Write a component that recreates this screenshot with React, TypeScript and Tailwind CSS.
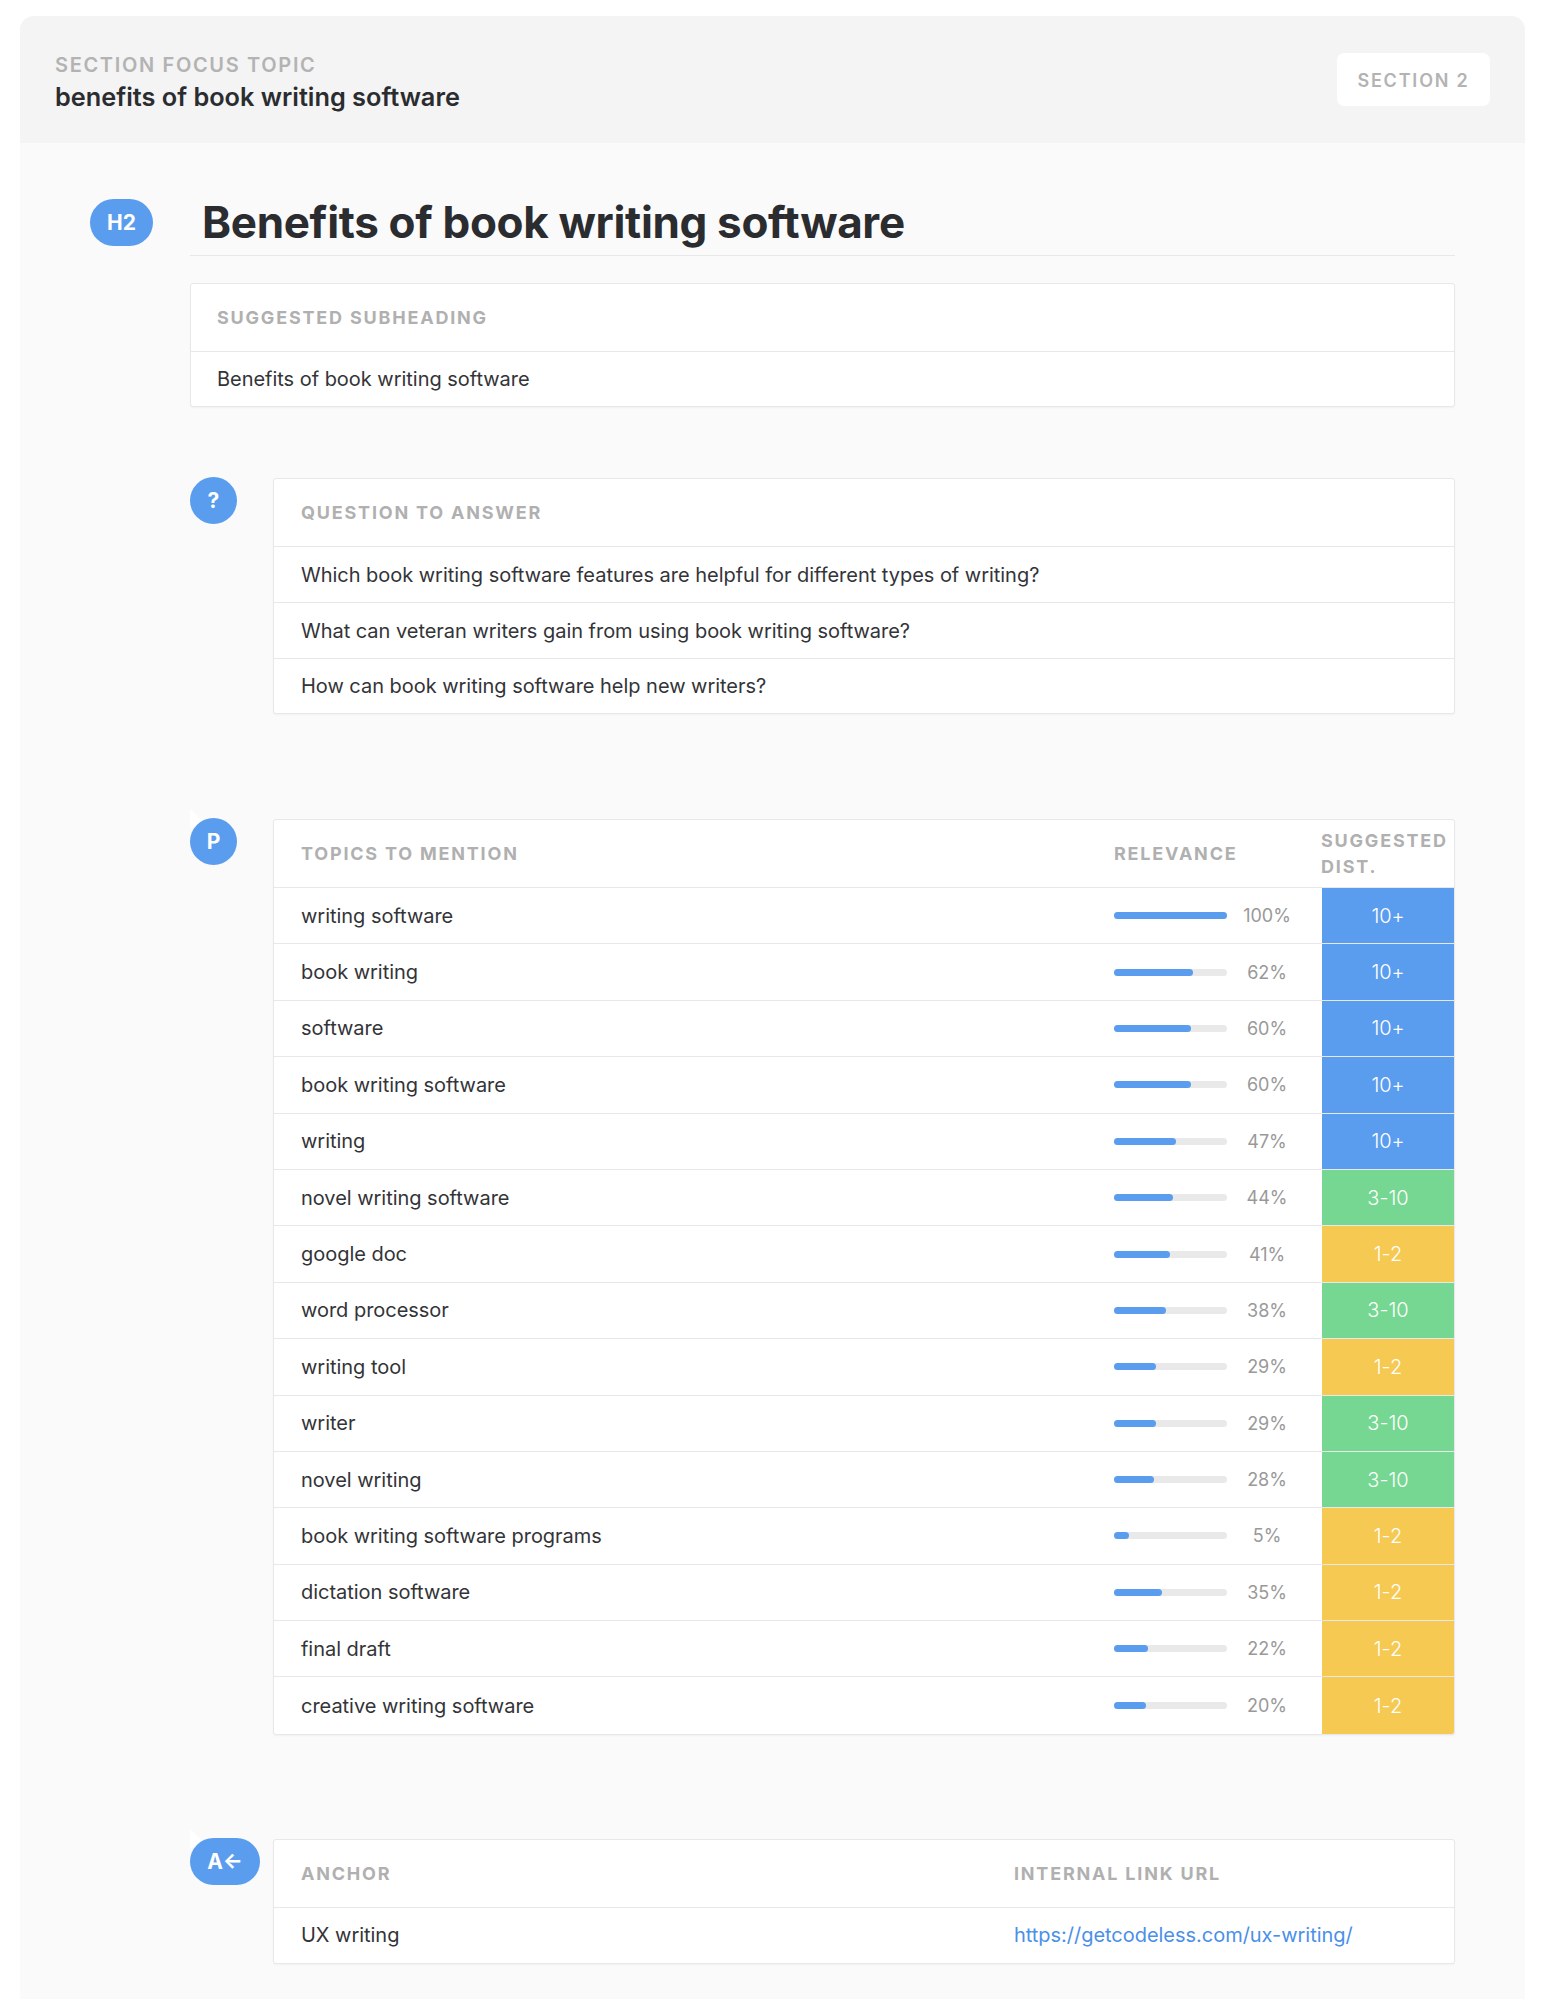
import React from "react"

type Topic = { name: string; pct: number; fill: number; dist: "10+" | "3-10" | "1-2" }

const topics: Topic[] = [
  { name: "writing software", pct: 100, fill: 113, dist: "10+" },
  { name: "book writing", pct: 62, fill: 79, dist: "10+" },
  { name: "software", pct: 60, fill: 77, dist: "10+" },
  { name: "book writing software", pct: 60, fill: 77, dist: "10+" },
  { name: "writing", pct: 47, fill: 62, dist: "10+" },
  { name: "novel writing software", pct: 44, fill: 59, dist: "3-10" },
  { name: "google doc", pct: 41, fill: 56, dist: "1-2" },
  { name: "word processor", pct: 38, fill: 52, dist: "3-10" },
  { name: "writing tool", pct: 29, fill: 42, dist: "1-2" },
  { name: "writer", pct: 29, fill: 42, dist: "3-10" },
  { name: "novel writing", pct: 28, fill: 40, dist: "3-10" },
  { name: "book writing software programs", pct: 5, fill: 15, dist: "1-2" },
  { name: "dictation software", pct: 35, fill: 48, dist: "1-2" },
  { name: "final draft", pct: 22, fill: 34, dist: "1-2" },
  { name: "creative writing software", pct: 20, fill: 32, dist: "1-2" },
]

const questions = [
  "Which book writing software features are helpful for different types of writing?",
  "What can veteran writers gain from using book writing software?",
  "How can book writing software help new writers?",
]

const Label = ({ children }: { children: React.ReactNode }) => (
  <span className="text-[18px] leading-[26px] font-bold tracking-[0.1em] text-[#b0b0b0]">{children}</span>
)

const Badge = ({ children, wide, tick }: { children: React.ReactNode; wide?: boolean; tick?: boolean }) => (
  <div className="relative -mt-px shrink-0 w-[83px]">
    {tick && (
      <svg className="absolute -top-[9px] left-0 w-[12px] h-[20px]" viewBox="0 0 12 20">
        <polygon points="0,0 12,12 0,20" fill="#ffffff" />
      </svg>
    )}
    <div
      className={`relative flex items-center justify-center h-[47px] rounded-full bg-[#5a9dee] text-white text-[21px] font-bold ${
        wide ? "w-[70px]" : "w-[47px]"
      }`}
    >
      {children}
    </div>
  </div>
)

const Card = ({ children }: { children: React.ReactNode }) => (
  <div className="flex-1 min-w-0 bg-white border border-[#e8e8e8] rounded-[3px] shadow-[0_1px_2px_rgba(0,0,0,0.04)] overflow-hidden tracking-[-0.03px]">
    {children}
  </div>
)

const CardHead = ({ children }: { children: React.ReactNode }) => (
  <div className="flex items-center h-[68px] pt-px px-[27px] border-b border-[#e8e8e8]">{children}</div>
)

const distColor = (dist: Topic["dist"]) => {
  if (dist === "10+") return "bg-[#5a9dee]"
  if (dist === "3-10") return "bg-[#75d792]"
  return "bg-[#f5c952]"
}

const TopicRow = ({ topic, last }: { topic: Topic; last: boolean }) => (
  <div className={`flex items-stretch h-[56.4px] ${last ? "" : "border-b border-[#e8e8e8]"}`}>
    <div className="flex items-center w-[840px] pl-[27px] text-[20px] text-[#333438]">{topic.name}</div>
    <div className="flex items-center w-[208px]">
      <div className="w-[113px] h-[7px] rounded-full bg-[#e9e9e9]">
        <div className="h-full rounded-full bg-[#5a9dee]" style={{ width: topic.fill }} />
      </div>
      <div className="w-[80px] text-center text-[18px] text-[#999999]">{topic.pct}%</div>
    </div>
    <div className={`flex flex-1 items-center justify-center text-[20px] font-light text-white ${distColor(topic.dist)}`}>
      {topic.dist}
    </div>
  </div>
)

export default function App() {
  return (
    <div className="h-[1999px] overflow-hidden bg-white pt-[16px] pl-[20px] font-['Inter',sans-serif]">
      <div className="w-[1505px] h-[1983px] rounded-t-[14px] bg-[#fafafa]">
        <header className="flex items-center justify-between h-[127px] px-[35px] rounded-t-[14px] bg-[#f4f4f4]">
          <div className="flex flex-col pt-[3px]">
            <span className="text-[20px] leading-[31px] font-semibold tracking-[0.083em] text-[#b3b3b3]">
              SECTION FOCUS TOPIC
            </span>
            <span className="text-[25.3px] leading-[31px] font-semibold text-[#2b2c30]">
              benefits of book writing software
            </span>
          </div>
          <div className="flex items-center justify-center w-[153px] h-[53px] pt-px rounded-[7px] bg-white text-[18px] font-semibold tracking-[0.1em] text-[#b3b3b3]">
            SECTION 2
          </div>
        </header>

        <div className="pt-[56px] px-[70px]">
          <div className="flex">
            <div className="flex shrink-0 items-center justify-center w-[63px] h-[47px] mr-[37px] rounded-full bg-[#5a9dee] text-white text-[21px] font-bold">
              H2
            </div>
            <h2 className="flex-1 h-[57px] pl-[12px] border-b border-[#e8e8e8] text-[44px] leading-[46px] font-bold tracking-[-0.0075em] text-[#2b2c30]">
              Benefits of book writing software
            </h2>
          </div>

          <div className="flex mt-[27px] ml-[100px]">
            <Card>
              <div className="flex items-center h-[68px] pt-px px-[26px] border-b border-[#e8e8e8]">
                <Label>SUGGESTED SUBHEADING</Label>
              </div>
              <div className="flex items-center h-[54px] px-[26px] text-[20px] text-[#333438]">
                Benefits of book writing software
              </div>
            </Card>
          </div>

          <div className="flex mt-[71px] ml-[100px]">
            <Badge>?</Badge>
            <Card>
              <CardHead>
                <Label>QUESTION TO ANSWER</Label>
              </CardHead>
              <div className="flex items-center h-[56px] px-[27px] border-b border-[#e8e8e8] text-[20px] text-[#333438]">
                {questions[0]}
              </div>
              <div className="flex items-center h-[56px] px-[27px] border-b border-[#e8e8e8] text-[20px] text-[#333438]">
                {questions[1]}
              </div>
              <div className="flex items-center h-[54px] px-[27px] text-[20px] text-[#333438]">{questions[2]}</div>
            </Card>
          </div>

          <div className="flex mt-[105px] ml-[100px]">
            <Badge tick>P</Badge>
            <Card>
              <div className="flex items-center h-[68px] border-b border-[#e8e8e8]">
                <div className="w-[840px] pl-[27px]">
                  <Label>TOPICS TO MENTION</Label>
                </div>
                <div className="w-[207px]">
                  <Label>RELEVANCE</Label>
                </div>
                <div className="flex-1 leading-[26px]">
                  <Label>
                    SUGGESTED
                    <br />
                    DIST.
                  </Label>
                </div>
              </div>
              {topics.map((t, i) => (
                <TopicRow key={t.name} topic={t} last={i === topics.length - 1} />
              ))}
            </Card>
          </div>

          <div className="flex mt-[104px] ml-[100px]">
            <Badge wide tick>
              A←
            </Badge>
            <Card>
              <CardHead>
                <div className="w-[713px]">
                  <Label>ANCHOR</Label>
                </div>
                <Label>INTERNAL LINK URL</Label>
              </CardHead>
              <div className="flex items-center h-[55px] px-[27px] text-[20px]">
                <div className="w-[713px] text-[#333438]">UX writing</div>
                <a href="#" className="text-[#4a90e8]">
                  https://getcodeless.com/ux-writing/
                </a>
              </div>
            </Card>
          </div>
        </div>
      </div>
    </div>
  )
}
